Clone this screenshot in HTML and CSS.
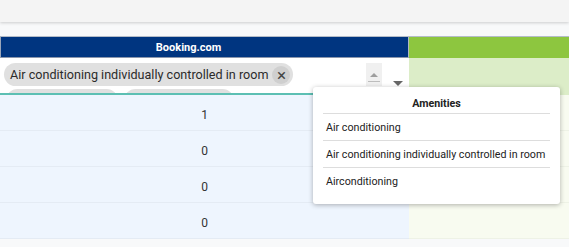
FILE: index.html
```html
<!DOCTYPE html>
<html>
<head>
<meta charset="utf-8">
<link rel="stylesheet" href="styles.css">
</head>
<body>
<div class="topbar"></div>
<div class="spacer"></div>
<div class="table">
  <div class="head head-booking">Booking.com</div>
  <div class="head head-green"></div>

  <div class="filter">
    <div class="chips">
      <div class="chip">Air conditioning individually controlled in room <span class="chip-x">×</span></div>
      <div class="chip ghost g1"></div>
      <div class="chip ghost g2"></div>
    </div>
    <div class="arrows">
      <span class="up"><svg width="16" height="23" viewBox="0 0 16 23"><path d="M4 14 L8 10 L12 14 Z" fill="#9e9e9e"/><rect x="2" y="18" width="12" height="1" fill="#bdbdbd"/></svg></span>
      <span class="down"><svg width="10" height="6" viewBox="0 0 10 6"><path d="M0 0 L10 0 L5 5 Z" fill="#666"/></svg></span>
    </div>
  </div>
  <div class="filter-green"></div>

  <div class="cell">1</div><div class="cell-g"></div>
  <div class="cell">0</div><div class="cell-g"></div>
  <div class="cell">0</div><div class="cell-g"></div>
  <div class="cell">0</div><div class="cell-g"></div>
</div>

<div class="popup">
  <div class="popup-title">Amenities</div>
  <div class="popup-item">Air conditioning</div>
  <div class="popup-item">Air conditioning individually controlled in room</div>
  <div class="popup-item last">Airconditioning</div>
</div>
</body>
</html>
```
FILE: styles.css
```css
* { box-sizing: border-box; }
html, body { margin: 0; padding: 0; }
body {
  width: 569px;
  height: 247px;
  overflow: hidden;
  background: #f8f9fa;
  font-family: Roboto, "Noto Sans", sans-serif;
  color: #333;
  position: relative;
}
.topbar {
  height: 22px;
  background: #f4f4f4;
  box-shadow: 0 1px 3px rgba(0,0,0,0.18);
  position: relative;
  z-index: 1;
}
.spacer { height: 14px; }
.table {
  display: grid;
  grid-template-columns: 409px 1fr;
}
.head {
  height: 22px;
  border-top: 1px solid #b4bcc8;
}
.head-booking {
  background: #003580;
  color: #fff;
  font-weight: bold;
  font-size: 11px;
  display: flex;
  align-items: center;
  justify-content: center;
  padding-right: 32px;
  border-left: 1px solid #9aa6ba;
  border-right: 1px solid #b0b8c4;
  border-bottom: 1px solid #8a96ac;
}
.head-green {
  background: #8dc63f;
}
.filter {
  height: 37px;
  background: #fff;
  border-bottom: 2px solid #5cbfb3;
  display: flex;
  justify-content: space-between;
  padding: 5px 0 0 4px;
  overflow: hidden;
}
.chips {
  display: flex;
  flex-wrap: wrap;
  gap: 3px 6px;
  width: 300px;
}
.chip {
  height: 23px;
  border-radius: 12px;
  background: #e0e0e0;
  font-size: 12.6px;
  color: #2b2b2b;
  display: flex;
  align-items: center;
  padding: 0 3px 0 6px;
  white-space: nowrap;
}
.chip-x {
  width: 18px;
  height: 18px;
  border-radius: 50%;
  background: #cfcfcf;
  margin-left: 4px;
  display: inline-flex;
  align-items: center;
  justify-content: center;
  font-size: 17px;
  color: #444;
}
.ghost.g1 { width: 112px; margin-left: 2px; }
.ghost.g2 { width: 110px; }
.arrows {
  display: flex;
  align-items: flex-start;
  padding-right: 6px;
}
.up {
  width: 16px;
  height: 23px;
  background: #f0f0f0;
  display: block;
}
.down {
  display: block;
  margin: 9px 0 0 11px;
}
.filter-green {
  background: #dcedc8;
  height: 37px;
}
.cell {
  height: 36px;
  background: #eef5fe;
  border-bottom: 1px solid #e4ebf4;
  display: flex;
  align-items: center;
  justify-content: center;
  font-size: 12px;
  color: #333;
  padding-top: 4px;
}
.cell-g {
  height: 36px;
  background: #f8fbf0;
  border-bottom: 1px solid #eef2e6;
}
.popup {
  position: absolute;
  left: 313px;
  top: 87px;
  width: 247px;
  height: 117px;
  background: #fff;
  border-radius: 3px;
  box-shadow: 0 1px 5px rgba(0,0,0,0.3);
  padding: 0 10px;
  font-size: 10.7px;
  color: #222;
  white-space: nowrap;
}
.popup-title {
  font-weight: bold;
  text-align: center;
  height: 27px;
  padding-top: 10px;
  border-bottom: 1px solid #ddd;
}
.popup-item {
  height: 27px;
  padding: 7px 0 0 3px;
  border-bottom: 1px solid #ddd;
}
.popup-item.last { border-bottom: none; }
```
